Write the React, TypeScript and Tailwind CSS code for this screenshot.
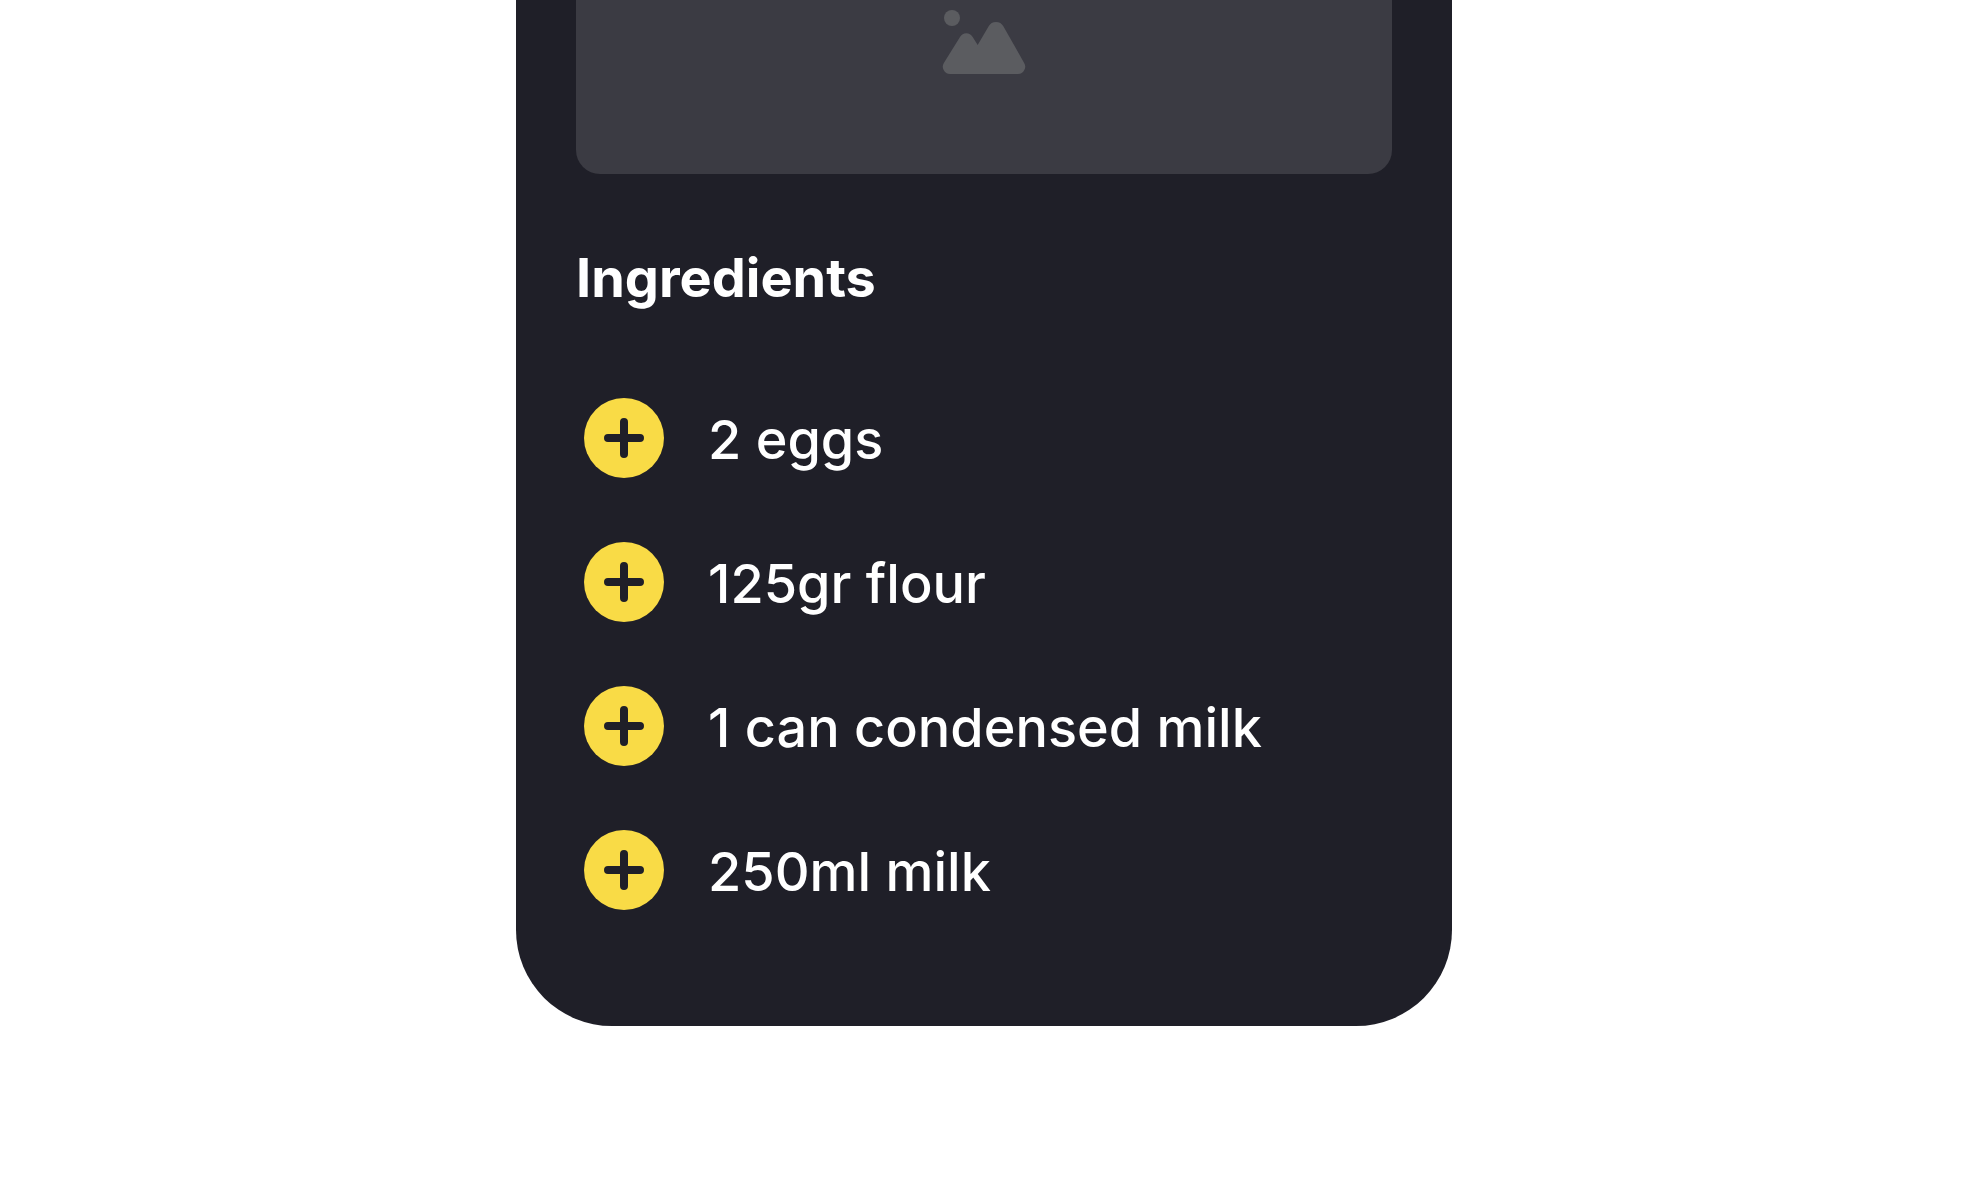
import React from "react";

const ingredients = ["2 eggs", "125gr flour", "1 can condensed milk", "250ml milk"];

function PictureIcon() {
  return (
    <svg className="h-20 w-[108px] fill-[#5b5c60]" viewBox="0 0 324 240" aria-hidden="true">
      <circle cx="66" cy="54" r="24" />
      <path d="M42 188L90 111A22 22 0 0 1 128 111L143 135L176 79A25 25 0 0 1 220 79L282 188A22 22 0 0 1 264 222H60A22 22 0 0 1 42 188Z" />
    </svg>
  );
}

function PlusIcon() {
  return (
    <svg className="size-10" viewBox="0 0 40 40" fill="none" stroke="#1f1f28" strokeWidth="8" strokeLinecap="round" aria-hidden="true">
      <path d="M20 4V36M4 20H36" />
    </svg>
  );
}

export default function App() {
  return (
    <div className="min-h-screen bg-white px-4 font-['Inter',sans-serif]">
      <main className="mx-auto max-w-[936px] rounded-b-[96px] bg-[#1f1f28] px-15 pb-21 text-white">
        <div className="flex justify-center rounded-b-3xl bg-[#3b3b43] pb-[94px]">
          <PictureIcon />
        </div>
        <h1 className="pt-17 text-[54px] leading-[72px] font-bold">Ingredients</h1>
        <ul className="mt-13 flex flex-col">
          {ingredients.map((name) => (
            <li key={name} className="flex h-36 items-center gap-11 pl-2">
              <button
                type="button"
                aria-label={`Add ${name}`}
                className="flex size-20 shrink-0 items-center justify-center rounded-full bg-[#f9db46]"
              >
                <PlusIcon />
              </button>
              <span className="pt-1 text-[54px] leading-[72px] font-medium">{name}</span>
            </li>
          ))}
        </ul>
      </main>
    </div>
  );
}
